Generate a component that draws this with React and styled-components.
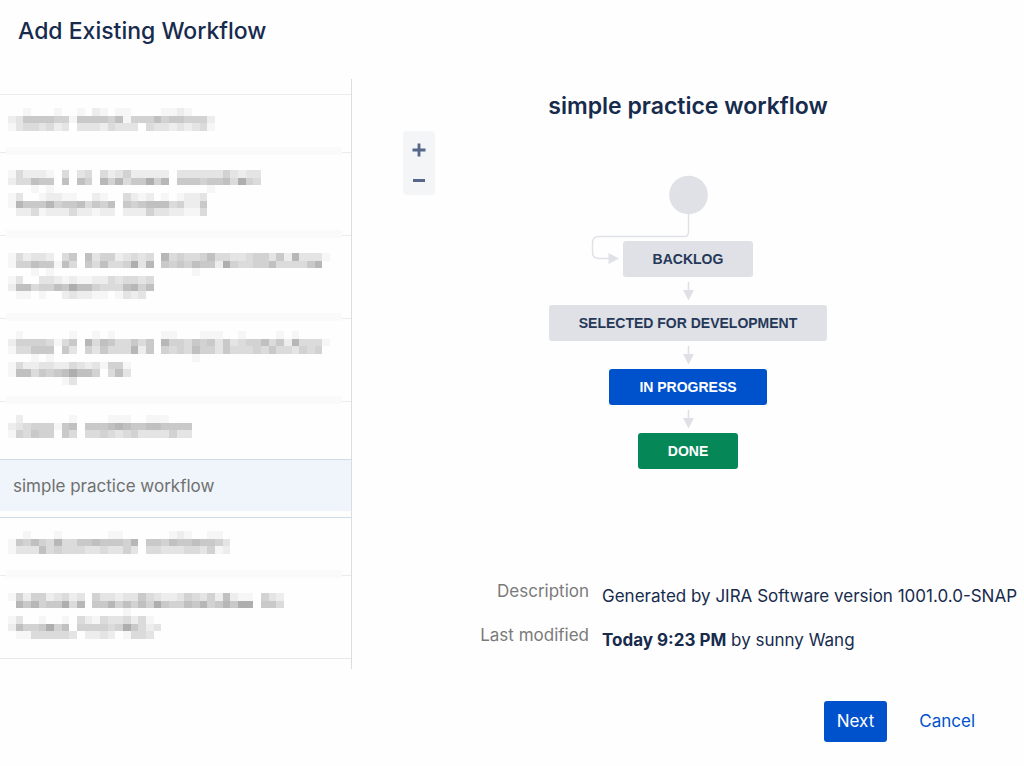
import React from "react";
import styled, { createGlobalStyle } from "styled-components";

const GlobalStyle = createGlobalStyle`
  *, *::before, *::after { box-sizing: border-box; }
  body {
    margin: 0;
    background: #fefefe;
    color: #172b4d;
    font-family: Inter, "Liberation Sans", sans-serif;
    font-size: 17px;
    line-height: 25px;
    overflow-x: hidden;
  }
`;

const Dialog = styled.main`
  display: flex;
  flex-direction: column;
`;

const DialogTitle = styled.h1`
  margin: 0;
  padding: 15px 18px 32px;
  font-size: 23px;
  line-height: 32px;
  font-weight: 500;
`;

const Body = styled.div`
  display: grid;
  grid-template-columns: 352px minmax(0, 1fr);
`;

const Sidebar = styled.nav`
  border-right: 1px solid #dcdde0;
  padding: 15px 0 10px;
`;

const List = styled.ul`
  list-style: none;
  margin: 0;
  padding: 0;
  border-bottom: 1px solid #e8e8e8;
`;

const Item = styled.li`
  position: relative;
  border-top: 1px solid ${(p) => (p.$accent ? "#cfdbe5" : "#ebebeb")};
  padding-bottom: 6px;

  &::before {
    content: "";
    display: ${(p) => (p.$band ? "block" : "none")};
    position: absolute;
    inset: -6px 9px auto 6px;
    height: 8px;
    background: #fafafa;
  }
`;

const ItemLink = styled.a`
  display: block;
  padding: 14px ${(p) => (p.$masked ? 8 : 13)}px 12px;
  background: ${(p) => (p.$selected ? "#eff5fa" : "transparent")};
  color: #707070;
  text-decoration: none;
`;

const MosaicSvg = styled.svg`
  display: block;
  overflow: visible;
`;

const Details = styled.section`
  display: flex;
  flex-direction: column;
  min-width: 0;
  position: relative;
`;

const WorkflowTitle = styled.h2`
  margin: 0;
  padding-top: 11px;
  text-align: center;
  font-size: 23px;
  line-height: 32px;
  font-weight: 600;
`;

const ZoomControls = styled.div`
  position: absolute;
  top: 52px;
  left: 51px;
  display: flex;
  flex-direction: column;
  padding: 4px 0 0;
  width: 32px;
  height: 64px;
  background: #f4f5f7;
  border-radius: 4px;
`;

const ZoomButton = styled.button`
  display: grid;
  place-items: center;
  width: 32px;
  height: 30px;
  padding: 0;
  border: 0;
  background: none;
  color: #56678a;
  cursor: pointer;
`;

const Diagram = styled.div`
  display: flex;
  flex-direction: column;
  align-items: center;
  padding-top: 53px;
`;

const Drawing = styled.svg`
  display: block;
  overflow: visible;
`;

const tones = {
  todo: ["#dfe1e6", "#253858"],
  progress: ["#0052cc", "#ffffff"],
  done: ["#068757", "#ffffff"],
};

const Status = styled.div`
  padding: 0 30px;
  border-radius: 3px;
  background: ${(p) => tones[p.$tone][0]};
  color: ${(p) => tones[p.$tone][1]};
  font: bold 14px/36px "Liberation Sans", Arial, sans-serif;
  white-space: nowrap;
`;

const Facts = styled.dl`
  display: grid;
  grid-template-columns: 237px minmax(0, 1fr);
  column-gap: 13px;
  row-gap: 14px;
  margin: 0;
  padding-top: 110px;
`;

const Term = styled.dt`
  height: 30px;
  color: #7a7a7a;
  text-align: right;
`;

const Value = styled.dd`
  margin: 0;
  padding-top: 5px;
  white-space: nowrap;
  overflow: hidden;
`;

const Footer = styled.footer`
  display: flex;
  justify-content: flex-end;
  align-items: center;
  gap: 19px;
  padding: 32px 36px 24px;
`;

const NextButton = styled.button`
  height: 41px;
  padding: 0 13px;
  border: 0;
  border-radius: 3px;
  background: #0052cc;
  color: #fff;
  font: inherit;
  cursor: pointer;
`;

const CancelLink = styled.a`
  padding: 0 13px;
  color: #0052cc;
  text-decoration: none;
`;

/* First row's offset inside the drawing, keyed by the number of mosaic rows. */
const rowStart = { 3: -3, 6: 9, 7: -6 };

function Mosaic({ rows }) {
  const tall = rows.length > 3;
  return (
    <MosaicSvg
      width="322"
      height={tall ? 50 : 25}
      viewBox={`0 0 966 ${tall ? 150 : 75}`}
      shapeRendering="crispEdges"
      aria-hidden="true"
    >
      {rows.map((row, y) =>
        [...row].map((level, x) => {
          if (level === ".") return null;
          const shade = 255 - Number(level) * 9;
          return (
            <rect
              key={`${x}-${y}`}
              x={x * 23}
              y={y * 23 + rowStart[rows.length]}
              width="23"
              height="23"
              fill={`rgb(${shade},${shade},${shade})`}
            />
          );
        })
      )}
    </MosaicSvg>
  );
}

const workflows = [
  {
    rows: [
      "..1...1..1.21.11....1121",
      "236666551666657155575665552",
      "134434230333243330433232341",
    ],
  },
  {
    band: true,
    rows: [
      "142221.4.34.423522222.33333353233",
      "244766.7.75.858466958.66656674954",
      "...1.1....................1",
      "13..12211..21..4212.1.1223",
      "18666856674657.65677745226",
      ".2241222422122.22253322114",
    ],
  },
  {
    band: true,
    rows: [
      "142332.46.735523434.8454457443345536283331",
      "155766174.647445938.656576629544557444468",
      "...1.1..................1",
      "13..332121122434434",
      "2774557697754447857",
      ".11.1..232211.1323",
    ],
  },
  {
    band: true,
    rows: [
      ".1......1..1.1......11...111..1....1.1",
      "255554146.847644646.8554656363455746284441",
      "144666.63.536444826.545475536444546443545",
      "...1.1..................1",
      "1422332243231551",
      "177465679775.473",
      ".......13",
    ],
  },
  {
    band: true,
    rows: [
      ".2......1....111..111",
      "234555167.66678766776666",
      "154655.64.44543453333533",
    ],
  },
  { name: "simple practice workflow", selected: true },
  {
    accent: true,
    rows: [
      "..1...1......11......121..11",
      "16575484466766658.66576676653",
      "13337454443343353.44333443512",
    ],
  },
  {
    band: true,
    rows: [
      "1525523423.533233643223543527211.532",
      ".868566948.668575759655768568699.664",
      "...............1",
      "13..1..1.4214334241",
      "27556957.55554596423",
      ".11444443.2232.1443",
    ],
  },
];

const statuses = [
  { label: "BACKLOG", tone: "todo" },
  { label: "SELECTED FOR DEVELOPMENT", tone: "todo" },
  { label: "IN PROGRESS", tone: "progress" },
  { label: "DONE", tone: "done" },
];

function StartMarker() {
  return (
    <Drawing width="38" height="66" viewBox="0 0 38 66" fill="none" aria-hidden="true">
      <circle cx="19.5" cy="20" r="19.3" fill="#dfe1e6" />
      <path
        d="M19.5 39V57Q19.5 61.5 15 61.5H-70Q-76.5 61.5-76.5 68V77Q-76.5 83.5-70 83.5H-60"
        stroke="#dfe1e6"
        strokeWidth="1.4"
      />
      <path d="M-60.5 78V89L-50 83.5Z" fill="#dfe1e6" />
    </Drawing>
  );
}

function Arrow() {
  return (
    <Drawing width="12" height="28" viewBox="0 0 12 28" aria-hidden="true">
      <path d="M5.7 5h1.6v8H12L6.5 23.5 1 13h4.7Z" fill="#dfe1e6" />
    </Drawing>
  );
}

export default function App() {
  return (
    <>
      <GlobalStyle />
      <Dialog>
        <DialogTitle>Add Existing Workflow</DialogTitle>
        <Body>
          <Sidebar>
            <List>
              {workflows.map((item, i) => (
                <Item key={i} $band={item.band} $accent={item.selected || item.accent}>
                  <ItemLink
                    href="#"
                    $masked={Boolean(item.rows)}
                    $selected={item.selected}
                    aria-current={item.selected ? "true" : undefined}
                  >
                    {item.rows ? <Mosaic rows={item.rows} /> : item.name}
                  </ItemLink>
                </Item>
              ))}
            </List>
          </Sidebar>
          <Details>
            <WorkflowTitle>simple practice workflow</WorkflowTitle>
            <ZoomControls>
              <ZoomButton type="button" aria-label="+">
                <Drawing width="14" height="14" viewBox="0 0 14 14" aria-hidden="true">
                  <path d="M5.6 .5h2.8v5.1h5.1v2.8H8.4v5.1H5.6V8.4H.5V5.6h5.1Z" fill="currentColor" />
                </Drawing>
              </ZoomButton>
              <ZoomButton type="button" aria-label="−">
                <Drawing width="14" height="14" viewBox="0 0 14 14" aria-hidden="true">
                  <path d="M1 6h12v3H1Z" fill="currentColor" />
                </Drawing>
              </ZoomButton>
            </ZoomControls>
            <Diagram>
              <StartMarker />
              {statuses.map((s, i) => (
                <React.Fragment key={s.label}>
                  {i > 0 && <Arrow />}
                  <Status $tone={s.tone}>{s.label}</Status>
                </React.Fragment>
              ))}
            </Diagram>
            <Facts>
              <Term>Description</Term>
              <Value>Generated by JIRA Software version 1001.0.0-SNAP</Value>
              <Term>Last modified</Term>
              <Value>
                <strong>Today 9:23 PM</strong> by sunny Wang
              </Value>
            </Facts>
          </Details>
        </Body>
        <Footer>
          <NextButton type="button">Next</NextButton>
          <CancelLink href="#">Cancel</CancelLink>
        </Footer>
      </Dialog>
    </>
  );
}
